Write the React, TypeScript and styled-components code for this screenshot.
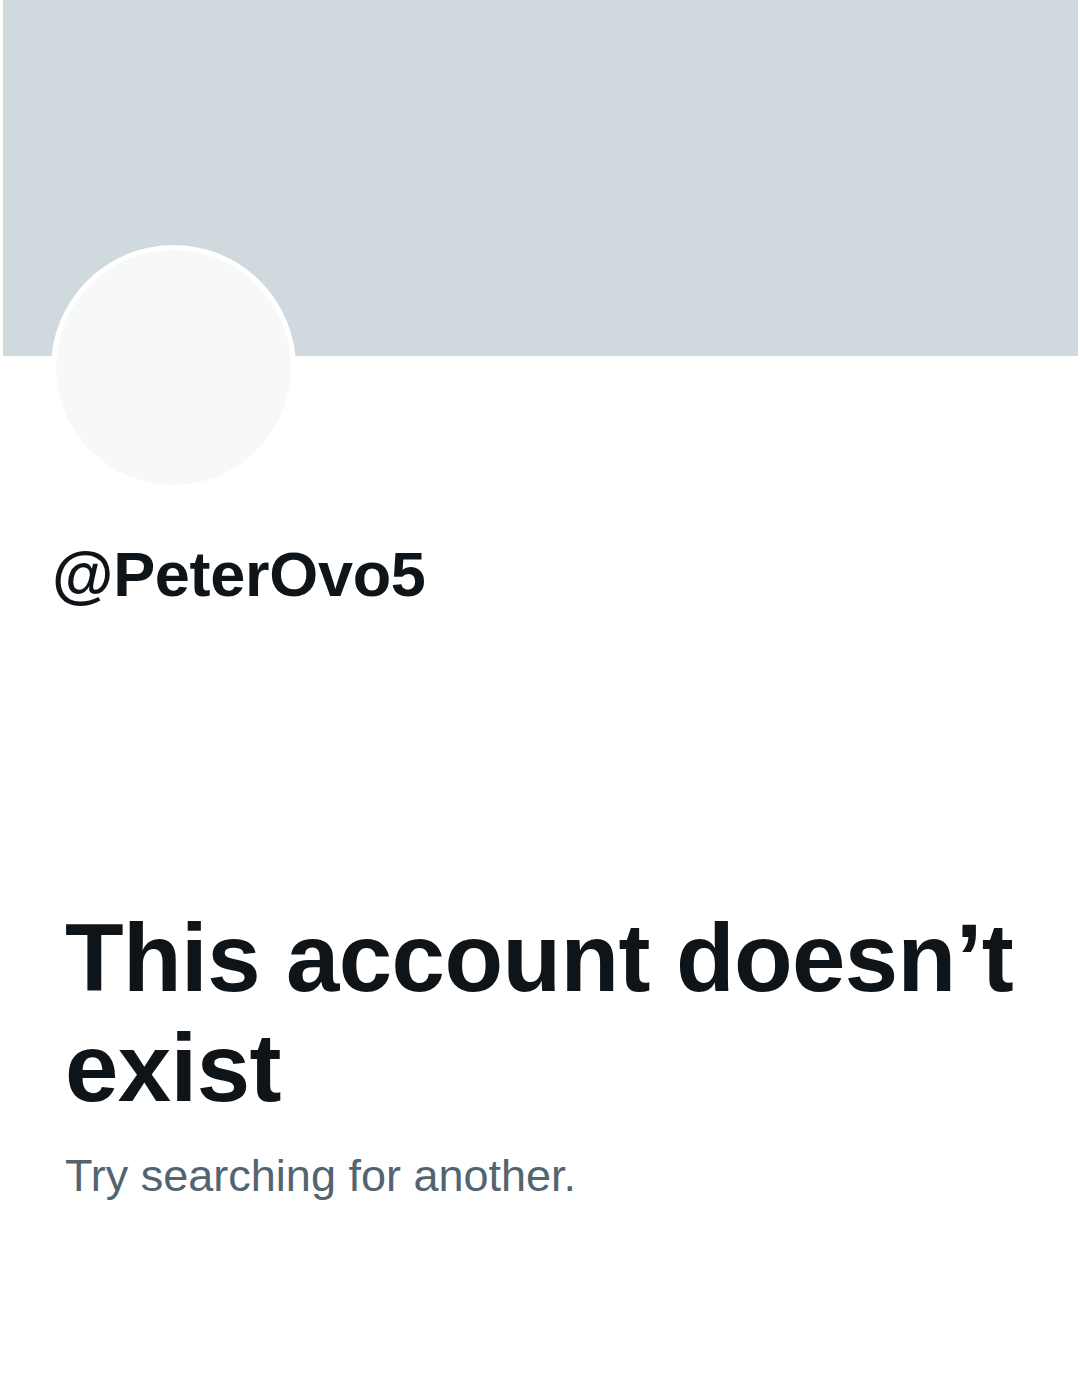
import React from 'react';
import styled, { createGlobalStyle } from 'styled-components';

const GlobalStyle = createGlobalStyle`
  body {
    margin: 0;
    background: #ffffff;
    font-family: "Liberation Sans", Arial, sans-serif;
  }
`;

const Page = styled.div`
  width: 1080px;
  min-height: 1378px;
  display: flex;
  flex-direction: column;
`;

const Banner = styled.div`
  margin-left: 3px;
  width: 1075px;
  height: 356px;
  background: #cfd9de;
`;

const Avatar = styled.div`
  margin: -111px 0 0 51px;
  width: 235px;
  height: 235px;
  border-radius: 50%;
  border: 5px solid #ffffff;
  background: #f7f9f9;
`;

const Handle = styled.div`
  margin: 46px 0 0 52px;
  font-size: 63px;
  line-height: 76px;
  font-weight: 700;
  color: #0f1419;
  letter-spacing: -0.3px;
`;

const Empty = styled.div`
  margin: 291px 0 0 65px;
  width: 970px;
  display: flex;
  flex-direction: column;
`;

const Title = styled.h1`
  margin: 0;
  font-size: 96px;
  line-height: 110px;
  font-weight: 700;
  color: #0f1419;
  letter-spacing: -0.6px;
`;

const Hint = styled.p`
  margin: 25px 0 0;
  font-size: 45px;
  line-height: 56px;
  color: #536471;
`;

const App: React.FC = () => {
  return (
    <Page>
      <GlobalStyle />
      <Banner />
      <Avatar />
      <Handle>@PeterOvo5</Handle>
      <Empty>
        <Title>This account doesn’t exist</Title>
        <Hint>Try searching for another.</Hint>
      </Empty>
    </Page>
  );
};

export default App;
